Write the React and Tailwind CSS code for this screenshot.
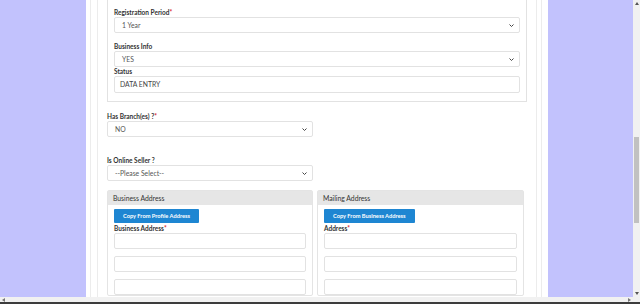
import React from 'react';

// Business registration form – scrolled view
const Chevron = () => (
    <svg width="5" height="3" viewBox="0 0 5 3" className="shrink-0">
        <path d="M0.5 0.5 L2.5 2.5 L4.5 0.5" fill="none" stroke="#444" strokeWidth="1" />
    </svg>
);

const Req = () => <span className="text-[#d9232e]">*</span>;

const Label = ({ children, className = '' }) => (
    <div className={`text-[6.5px] leading-[9px] font-bold text-[#333] ${className}`}>{children}</div>
);

const Select = ({ value, className = '' }) => (
    <div className={`h-[16px] border border-[#e2e2e2] rounded-[2px] bg-white flex items-center justify-between pl-[7px] pr-[5px] ${className}`}>
        <span className="text-[6.8px] text-[#555]">{value}</span>
        <Chevron />
    </div>
);

const Input = ({ value = '', className = '' }) => (
    <div className={`h-[16px] border border-[#e2e2e2] rounded-[2px] bg-white flex items-center pl-[5px] ${className}`}>
        <span className="text-[6.8px] text-[#444]">{value}</span>
    </div>
);

const AddressPanel = ({ title, button, label, className = '' }) => (
    <div className={`border border-[#e4e4e4] rounded-[2px] ${className}`}>
        <div className="h-[14px] bg-[#e6e6e6] flex items-center pl-[5px] text-[6.8px] text-[#333]">{title}</div>
        <div className="px-[6px] pt-[4px]">
            <div className="bg-[#1e86d2] rounded-[1px] h-[14px] w-fit px-[9px] flex items-center text-white text-[5.7px] font-bold">{button}</div>
            <Label className="mt-[1px]">{label}<Req /></Label>
            <div className="flex flex-col gap-[7px]">
                <Input />
                <Input />
                <Input />
            </div>
        </div>
    </div>
);

export default function App() {
    return (
        <div className="w-[640px] h-[304px] flex flex-col overflow-hidden" style={{ fontFamily: 'Lato, "Open Sans", sans-serif' }}>
            <div className="flex h-[297px]">
                <div className="w-[633px] bg-[#c2c2fd] flex overflow-hidden">
                    <div className="w-[86px] shrink-0" />
                    <div className="w-[462px] shrink-0 bg-white pl-[4px] pr-[6px]">
                        <div className="h-full border-x border-[#ececec] pl-[6px] pr-[4px]">
                            <div className="h-full border-x border-[#ececec] pl-[9px] pr-[9px]">
                                {/* registration panel (top cut off) */}
                                <div className="border-x border-b border-[#e2e2e2] px-[6px] pt-[8px] pb-[8px]">
                                    <Label>Registration Period<Req /></Label>
                                    <Select value="1 Year" />
                                    <Label className="mt-[9px]">Business Info</Label>
                                    <Select value="YES" />
                                    <Label>Status</Label>
                                    <Input value="DATA ENTRY" className="h-[17px]" />
                                </div>

                                <Label className="mt-[10px]">Has Branch(es) ?<Req /></Label>
                                <Select value="NO" className="w-[206px]" />

                                <Label className="mt-[19px]">Is Online Seller ?</Label>
                                <Select value="--Please Select--" className="w-[206px]" />

                                <div className="flex gap-[4px] mt-[9px]">
                                    <AddressPanel className="w-[206px]" title="Business Address" button="Copy From Profile Address" label="Business Address" />
                                    <AddressPanel className="w-[207px]" title="Mailing Address" button="Copy From Business Address" label="Address" />
                                </div>
                            </div>
                        </div>
                    </div>
                </div>
                {/* vertical scrollbar */}
                <div className="w-[7px] bg-[#f1f1f1] flex flex-col items-center">
                    <div className="h-[7px] flex items-center justify-center">
                        <svg width="4" height="3" viewBox="0 0 4 3"><path d="M0 3 L2 0 L4 3Z" fill="#555" /></svg>
                    </div>
                    <div className="h-[130px]" />
                    <div className="w-[5px] h-[86px] bg-[#c1c1c1]" />
                    <div className="flex-1" />
                    <div className="h-[7px] flex items-center justify-center">
                        <svg width="4" height="3" viewBox="0 0 4 3"><path d="M0 0 L2 3 L4 0Z" fill="#555" /></svg>
                    </div>
                </div>
            </div>
            {/* horizontal scrollbar */}
            <div className="h-[5px] bg-[#f1f1f1] flex items-center justify-between pl-[2px] pr-[9px]">
                <svg width="3" height="4" viewBox="0 0 3 4"><path d="M3 0 L0 2 L3 4Z" fill="#777" /></svg>
                <svg width="3" height="4" viewBox="0 0 3 4"><path d="M0 0 L3 2 L0 4Z" fill="#777" /></svg>
            </div>
            <div className="h-[2px] bg-[#3c3c3c]" />
        </div>
    );
}
